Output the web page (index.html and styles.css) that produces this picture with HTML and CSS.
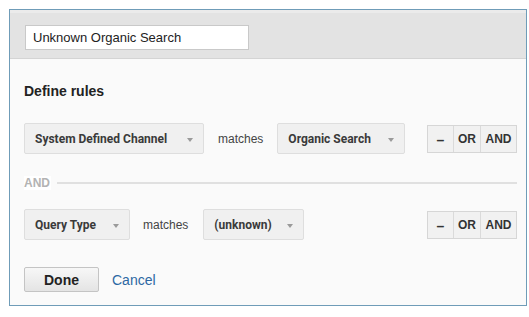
FILE: index.html
```html
<!DOCTYPE html>
<html>
<head>
<meta charset="utf-8">
<link rel="stylesheet" href="styles.css">
</head>
<body>
<div class="panel">
  <div class="header">
    <div class="name-input">Unknown Organic Search</div>
  </div>
  <div class="body">
    <div class="title">Define rules</div>
    <div class="rule">
      <div class="dd dd-1">System Defined Channel<span class="arrow"></span></div>
      <span class="op">matches</span>
      <div class="dd dd-2">Organic Search<span class="arrow"></span></div>
      <div class="btns">
        <span class="b b-minus">&ndash;</span><span class="b b-or">OR</span><span class="b b-and">AND</span>
      </div>
    </div>
    <div class="sep"><span class="sep-label">AND</span><span class="sep-line"></span></div>
    <div class="rule rule-2">
      <div class="dd dd-3">Query Type<span class="arrow"></span></div>
      <span class="op">matches</span>
      <div class="dd dd-4">(unknown)<span class="arrow"></span></div>
      <div class="btns">
        <span class="b b-minus">&ndash;</span><span class="b b-or">OR</span><span class="b b-and">AND</span>
      </div>
    </div>
    <div class="actions">
      <span class="done">Done</span>
      <span class="cancel">Cancel</span>
    </div>
  </div>
</div>
</body>
</html>
```

FILE: styles.css
```css
html, body {
  margin: 0;
  padding: 0;
  background: #ffffff;
}
body {
  font-family: Arial, "Liberation Sans", sans-serif;
  color: #333;
}
.panel {
  margin: 9px 0 0 9px;
  width: 516px;
  height: 295px;
  border: 1px solid #6f9cb8;
  background: #fafafa;
  box-sizing: content-box;
  display: flex;
  flex-direction: column;
}
.header {
  background: #e3e3e3;
  border-top: 3px solid #ebebeb;
  border-bottom: 1px solid #d4d4d4;
  padding: 12px 15px 8px 15px;
  height: 25px;
}
.name-input {
  width: 215px;
  height: 23px;
  background: #fff;
  border: 1px solid #c9c9c9;
  padding-left: 7px;
  font-size: 13px;
  line-height: 23px;
  color: #222;
}
.body {
  padding: 0 9px 0 14px;
}
.title {
  margin-top: 24px;
  font-size: 14px;
  font-weight: bold;
  line-height: 16px;
  color: #222;
}
.rule {
  display: flex;
  align-items: center;
  margin-top: 24px;
  height: 31px;
}
.rule-2 {
  margin-top: 19px;
}
.dd {
  height: 29px;
  border: 1px solid #dedede;
  border-radius: 2px;
  background: #f0f0f0;
  display: flex;
  align-items: center;
  padding: 0 10px 0 10px;
  font-family: Roboto, Arial, sans-serif;
  font-weight: bold;
  font-size: 12px;
  color: #3a3a3a;
  white-space: nowrap;
}
.arrow {
  width: 0;
  height: 0;
  border-left: 3.5px solid transparent;
  border-right: 3.5px solid transparent;
  border-top: 4px solid #9a9a9a;
  margin-left: auto;
  margin-top: 2px;
}
.dd-1 { width: 158px; }
.dd-2 { width: 106px; }
.dd-3 { width: 84px; }
.dd-4 { width: 79px; }
.op {
  font-size: 12px;
  color: #444;
  margin: 0 14px 0 14px;
}
.rule-2 .op { margin: 0 15px 0 13px; }
.btns {
  margin-left: auto;
  display: flex;
  height: 26px;
  border: 1px solid #d6d6d6;
  background: #f1f1f1;
}
.b {
  display: flex;
  align-items: center;
  justify-content: center;
  font-size: 12px;
  font-weight: bold;
  color: #333;
  border-left: 1px solid #dadada;
}
.b-minus { width: 25px; border-left: none; font-size: 14px; padding-top: 2px; box-sizing: border-box; }
.b-or { width: 26px; }
.b-and { width: 35px; }
.sep {
  display: flex;
  align-items: center;
  margin-top: 22px;
  height: 14px;
}
.sep-label {
  font-size: 12px;
  font-weight: bold;
  color: #b3b3b3;
  background: #fff;
  padding: 0 1px 0 0;
}
.sep-line {
  flex: 1;
  height: 2px;
  background: #e0e0e0;
  margin-left: 6px;
  margin-right: 0;
}
.actions {
  display: flex;
  align-items: center;
  margin-top: 27px;
}
.done {
  width: 73px;
  height: 23px;
  border: 1px solid #c4c4c4;
  border-radius: 2px;
  background: linear-gradient(#f7f7f7, #e4e4e4);
  display: flex;
  align-items: center;
  justify-content: center;
  font-size: 14px;
  font-weight: bold;
  color: #222;
}
.cancel {
  margin-left: 13px;
  font-size: 14px;
  color: #2d68a3;
}
```
